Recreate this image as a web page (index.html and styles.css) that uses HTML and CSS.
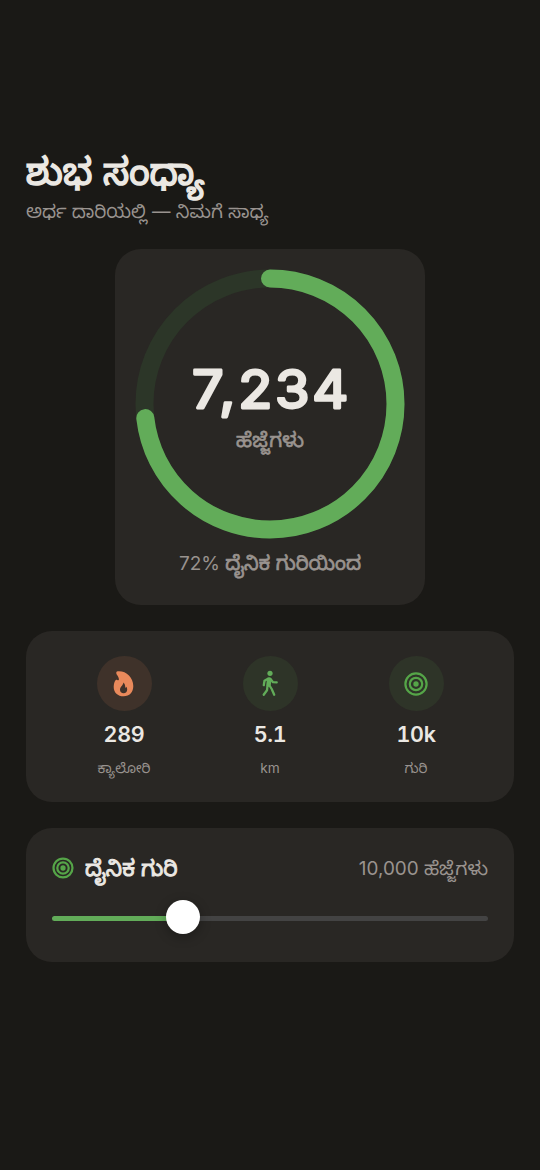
FILE: index.html
```html
<!DOCTYPE html>
<html lang="kn">
<head>
<meta charset="utf-8">
<title>ಶುಭ ಸಂಧ್ಯಾ</title>
<link rel="stylesheet" href="styles.css">
</head>
<body>
<main class="screen">
  <header class="greeting">
    <h1 class="title">ಶುಭ ಸಂಧ್ಯಾ</h1>
    <p class="subtitle">ಅರ್ಧ ದಾರಿಯಲ್ಲಿ — ನಿಮಗೆ ಸಾಧ್ಯ</p>
  </header>

  <section class="card progress">
    <svg class="ring" viewBox="0 0 270 270">
      <circle class="track" cx="135" cy="135" r="125.5"/>
      <circle class="arc" cx="135" cy="135" r="125.5" pathLength="100" stroke-dasharray="73.2 100" transform="rotate(-90 135 135)"/>
      <text class="count" x="57" y="138.500" textLength="159" lengthAdjust="spacingAndGlyphs">7,234</text>
      <text class="unit" x="135" y="178" text-anchor="middle">ಹೆಜ್ಜೆಗಳು</text>
    </svg>
    <p class="percent">72% <span class="strong">ದೈನಿಕ ಗುರಿಯಿಂದ</span></p>
  </section>

  <section class="card stats">
    <div class="stat">
      <div class="badge badge-warm">
        <svg class="icon" viewBox="0 0 28 28"><path class="flame" fill-rule="evenodd" d="M7.9 1.2C16 .6 23.300 7 23.300 16.100C23.300 22.500 19.500 26.300 13.700 26.300C7.700 26.300 3.700 22.600 3.700 17C3.700 14 4.500 12 5.500 10.300C6 9.500 6.700 9.600 7.300 10.100C8.100 10.700 9 10.200 8.900 9.200C8.900 8 8 6.300 6.700 4.500C5.800 2.900 6.200 1.300 7.900 1.200ZM13.300 12.400C13.500 15 10 16.600 10 19.700C10 22 11.500 23.200 13.500 23.200C15.800 23.200 17.200 21.800 17.200 19.500C17.200 18.300 16.900 17.400 16.300 16.800C16 17.500 15.700 17.800 15.200 17.800C15.400 15.500 14.800 13.500 13.300 12.400Z"/></svg>
      </div>
      <span class="value">289</span>
      <span class="label">ಕ್ಯಾಲೋರಿ</span>
    </div>
    <div class="stat">
      <div class="badge">
        <svg class="icon" viewBox="0 0 28 28"><circle class="solid" cx="14" cy="3.300" r="2.600"/><path class="limb torso" d="M13.200 9.600L12.600 14.600"/><path class="limb" d="M12 8.700L8.500 10.800L7.800 15.200M14.500 9L17 12.200L20.700 12.400M13.200 15L15.700 19L18.200 24.800M11.500 15.500L11 20.300L7.700 24.800"/></svg>
      </div>
      <span class="value">5.1</span>
      <span class="label">km</span>
    </div>
    <div class="stat">
      <div class="badge">
        <svg class="icon target" viewBox="0 0 28 28"><circle cx="14" cy="14" r="10.600"/><circle cx="14" cy="14" r="6.200"/><circle class="dot" cx="14" cy="14" r="2.700"/></svg>
      </div>
      <span class="value">10k</span>
      <span class="label">ಗುರಿ</span>
    </div>
  </section>

  <section class="card goal">
    <div class="goal-head">
      <svg class="goal-icon target" viewBox="3.200 3.200 21.600 21.600"><circle cx="14" cy="14" r="9.300"/><circle cx="14" cy="14" r="5.600"/><circle class="dot" cx="14" cy="14" r="2.600"/></svg>
      <h2 class="goal-title">ದೈನಿಕ ಗುರಿ</h2>
      <span class="goal-value">10,000 ಹೆಜ್ಜೆಗಳು</span>
    </div>
    <div class="slider">
      <div class="slider-fill"></div>
      <div class="thumb"></div>
      <div class="slider-rest"></div>
    </div>
  </section>
</main>
</body>
</html>
```
FILE: styles.css
```css
* { box-sizing: border-box; }
body { margin: 0; background: #1a1916; color: #ebe8e3; font-family: Inter, "Noto Sans Kannada", "Noto Sans", sans-serif; }
.screen { height: 1170px; padding: 149px 26px 0; display: flex; flex-direction: column; }
.greeting { height: 100px; }
.title { margin: 0; width: max-content; height: 46px; line-height: 46px; font-size: 37px; font-weight: 400; -webkit-text-stroke: 1.500px #ebe8e3; white-space: nowrap; }
.subtitle { margin: 3px 0 0; height: 26px; line-height: 26px; font-size: 18.500px; color: #99938f; white-space: nowrap; }
.card { background: #292724; border-radius: 26px; }
.progress { align-self: center; width: 310px; height: 356px; padding: 19.500px 20px 0; display: flex; flex-direction: column; align-items: center; }
.ring { width: 270px; height: 270px; overflow: visible; }
.track, .arc { fill: none; stroke-width: 18px; }
.track { stroke: #2c3628; }
.arc { stroke: #62ac59; stroke-linecap: round; }
.count { font-size: 52px; font-weight: 400; letter-spacing: 2.500px; fill: #ebe8e3; stroke: #ebe8e3; stroke-width: 2.800px; stroke-linejoin: round; }
.unit { font-size: 20px; fill: #99938f; stroke: #99938f; stroke-width: 0.600px; }
.percent { margin: 10px 0 0; height: 28px; line-height: 28px; font-size: 19px; color: #99938f; white-space: nowrap; }
.strong { -webkit-text-stroke: 0.700px #99938f; font-size: 19.800px; }
.stats { margin-top: 26px; height: 171px; padding: 25px 25px 0; display: grid; grid-template-columns: repeat(3, 1fr); }
.stat { display: flex; flex-direction: column; align-items: center; }
.badge { width: 55px; height: 55px; border-radius: 50%; background: #2e3428; display: flex; align-items: center; justify-content: center; }
.badge-warm { background: #3f322a; }
.icon { width: 28px; height: 28px; }
.flame { fill: #e9895b; }
.solid { fill: #62ac59; }
.limb { fill: none; stroke: #62ac59; stroke-width: 2.300px; stroke-linecap: round; stroke-linejoin: round; }
.torso { stroke-width: 4.500px; }
.target { fill: none; stroke: #55a548; stroke-width: 2.200px; }
.dot { fill: #55a548; stroke: none; }
.value { margin-top: 8px; line-height: 30px; font-size: 21.500px; font-weight: 600; font-variant-numeric: tabular-nums; letter-spacing: -0.300px; }
.label { margin-top: 8px; line-height: 22px; font-size: 13.700px; color: #99938f; white-space: nowrap; }
.goal { margin-top: 26px; height: 134px; padding: 25px 26px; }
.goal-head { display: flex; align-items: center; height: 30px; }
.goal-icon { width: 22px; height: 22px; }
.goal-title { margin: 0 auto 0 11px; font-size: 22px; line-height: 30px; font-weight: 400; -webkit-text-stroke: 0.900px #ebe8e3; white-space: nowrap; }
.goal-value { padding-top: 2px; font-size: 18.900px; line-height: 30px; color: #99938f; white-space: nowrap; }
.slider { margin-top: 17px; height: 34px; display: flex; align-items: center; }
.slider-fill { width: 120px; height: 5px; border-radius: 3px; background: #62ac59; margin-top: 3px; }
.slider-rest { flex: 1; height: 5px; border-radius: 3px; background: #434343; margin-top: 3px; margin-left: -6px; }
.thumb { width: 34px; height: 34px; margin-left: -6px; border-radius: 50%; background: #fff; box-shadow: 0 3px 12px #0000004d; position: relative; z-index: 1; }
```
